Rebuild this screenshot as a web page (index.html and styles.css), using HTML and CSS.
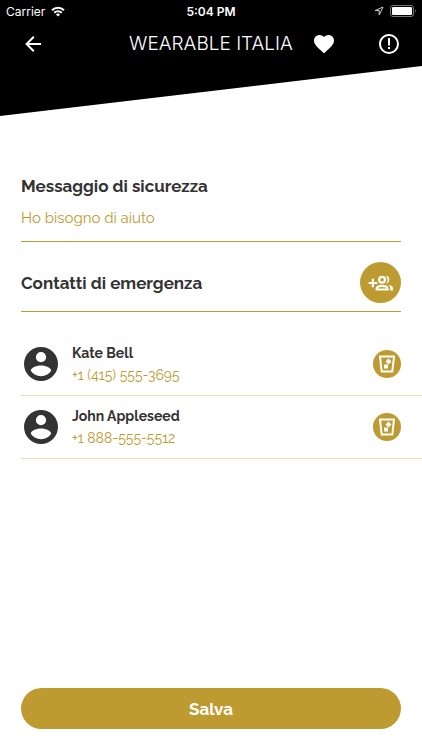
FILE: index.html
```html
<!DOCTYPE html>
<html lang="it">
<head>
<meta charset="UTF-8">
<meta name="viewport" content="width=device-width, initial-scale=1.0">
<title>Wearable Italia</title>
<link rel="stylesheet" href="styles.css">
</head>
<body>

<header class="header">
    <div class="status-bar">
        <div class="carrier">
            <span>Carrier</span>
            <svg width="14" height="11" viewBox="0 0 14 11" fill="none" stroke="#fff" stroke-width="2">
                <path d="M1 4.2a8.6 8.6 0 0 1 12 0M3.2 6.7a5.4 5.4 0 0 1 7.6 0"/>
                <path d="M7 10.6 4.9 8.5a3 3 0 0 1 4.2 0z" fill="#fff" stroke="none"/>
            </svg>
        </div>
        <span class="time">5:04 PM</span>
        <div class="battery">
            <svg width="10" height="10" viewBox="0 0 10 10" fill="none" stroke="#ccc" stroke-linejoin="round">
                <path d="M9 1 1 4.6h4.2V9z"/>
            </svg>
            <svg width="26" height="12" viewBox="0 0 26 12">
                <rect x=".5" y=".5" width="23" height="11" rx="2.5" fill="none" stroke="#777"/>
                <rect x="2" y="2" width="20" height="8" rx="1" fill="#fff"/>
                <path d="M25 4q1.5 2 0 4z" fill="#777"/>
            </svg>
        </div>
    </div>
    <nav class="nav-bar">
        <button class="icon-btn" aria-label="Indietro">
            <svg width="24" height="24" viewBox="0 0 24 24" fill="#fff"><path d="M20 11v2H8l5.5 5.5-1.42 1.42L4.16 12l7.92-7.92L13.5 5.5 8 11h12z"/></svg>
        </button>
        <h1>WEARABLE ITALIA</h1>
        <div class="nav-actions">
            <button class="icon-btn" aria-label="Preferiti">
                <svg width="24" height="24" viewBox="0 0 24 24" fill="#fff"><path d="m12 21.35-1.45-1.32C5.4 15.36 2 12.27 2 8.5 2 5.41 4.42 3 7.5 3c1.74 0 3.41.81 4.5 2.08C13.09 3.81 14.76 3 16.5 3 19.58 3 22 5.41 22 8.5c0 3.77-3.4 6.86-8.55 11.53z"/></svg>
            </button>
            <button class="icon-btn" aria-label="Avviso">
                <svg width="24" height="24" viewBox="0 0 24 24" fill="#fff"><path d="M11 15h2v2h-2zm0-9h2v7.500h-2zm1-4C6.47 2 2 6.5 2 12a10 10 0 0 0 20 0A10 10 0 0 0 12 2m0 18a8 8 0 1 1 0-16 8 8 0 0 1 0 16"/></svg>
            </button>
        </div>
    </nav>
</header>

<main class="content">
    <div class="message">
        <label for="message">Messaggio di sicurezza</label>
        <input type="text" id="message" value="Ho bisogno di aiuto">
    </div>

    <div class="contacts-header">
        <h2>Contatti di emergenza</h2>
        <button class="add-btn" aria-label="Aggiungi contatto">
            <svg width="26" height="26" viewBox="0 0 24 24" fill="none" stroke="#fff" stroke-width="2">
                <path d="M4.500 8v8M.500 12h8"/>
                <circle cx="13" cy="9" r="2.700"/>
                <path d="M8 18v-1c0-1.300 2.500-2.400 5-2.400s5 1.100 5 2.400v1z"/>
                <path d="M16.500 5.300c3.800.2 4.600 5.800.5 7.400 1.600-2.300 1.500-5.200-.5-7.400zM18.700 13.500c2.500.4 4.500 1.500 4.500 3.200V19h-2.700v-2.300c0-1.300-.7-2.300-1.800-3.200z" fill="#fff" stroke="none"/>
            </svg>
        </button>
    </div>

    <ul class="contacts">
        <li class="contact">
            <svg class="avatar" viewBox="2 2 20 20" fill="#333"><path d="M12 19.2c-2.500 0-4.710-1.280-6-3.200.03-2 4-3.100 6-3.100s5.970 1.100 6 3.100a7.230 7.230 0 0 1-6 3.200M12 5a3 3 0 1 1 0 6 3 3 0 0 1 0-6m0-3a10 10 0 1 0 0 20 10 10 0 0 0 0-20" fill-rule="evenodd"/></svg>
            <div class="contact-info">
                <span class="name">Kate Bell</span>
                <a class="phone" href="tel:+14155553695">+1 (415) 555-3695</a>
            </div>
            <button class="delete-btn" aria-label="Elimina Kate Bell">
                <svg width="18" height="18" viewBox="0 0 18 18" fill="none" stroke="#fff" stroke-width="2"><path d="M2 1.500h14L14.300 16.500H3.700z"/><path d="M6 9.500h4v4H6zM10.500 3.500l3 3-3 3-3-3z" fill="#fff" stroke="none"/></svg>
            </button>
        </li>
        <li class="contact">
            <svg class="avatar" viewBox="2 2 20 20" fill="#333"><path d="M12 19.2c-2.500 0-4.710-1.280-6-3.200.03-2 4-3.100 6-3.100s5.970 1.100 6 3.100a7.230 7.230 0 0 1-6 3.200M12 5a3 3 0 1 1 0 6 3 3 0 0 1 0-6m0-3a10 10 0 1 0 0 20 10 10 0 0 0 0-20" fill-rule="evenodd"/></svg>
            <div class="contact-info">
                <span class="name">John Appleseed</span>
                <a class="phone" href="tel:+18885555512">+1 888-555-5512</a>
            </div>
            <button class="delete-btn" aria-label="Elimina John Appleseed">
                <svg width="18" height="18" viewBox="0 0 18 18" fill="none" stroke="#fff" stroke-width="2"><path d="M2 1.500h14L14.300 16.500H3.700z"/><path d="M6 9.500h4v4H6zM10.500 3.500l3 3-3 3-3-3z" fill="#fff" stroke="none"/></svg>
            </button>
        </li>
    </ul>

    <button class="save-btn">Salva</button>
</main>

</body>
</html>
```
FILE: styles.css
```css
* {
    box-sizing: border-box;
}
body {
    font-family: Raleway, Lato, sans-serif;
    margin: 0;
    min-height: 100vh;
    display: flex;
    flex-direction: column;
    background-color: #fff;
    color: #333;
}
h1, h2 {
    margin: 0;
}
svg {
    display: block;
    flex-shrink: 0;
}
button {
    display: flex;
    align-items: center;
    justify-content: center;
    padding: 0;
    border: none;
    font-family: inherit;
    cursor: pointer;
}
.header {
    height: 116px;
    background-color: #000;
    color: #fff;
    clip-path: polygon(0 0, 100% 0, 100% 66px, 0 100%);
}
.status-bar {
    display: grid;
    grid-template-columns: 1fr auto 1fr;
    align-items: center;
    height: 22px;
    padding: 0 6px;
    font-family: Inter, sans-serif;
    font-size: 12px;
}
.carrier, .battery {
    display: flex;
    align-items: center;
    gap: 6px;
}
.battery {
    justify-content: flex-end;
}
.time {
    font-weight: 600;
}
.nav-bar {
    display: grid;
    grid-template-columns: 1fr auto 1fr;
    align-items: center;
    height: 43px;
    padding: 0 21px;
}
.nav-bar h1 {
    font-family: Inter, sans-serif;
    font-size: 19px;
    font-weight: 300;
}
.nav-actions {
    display: flex;
    justify-content: space-between;
    padding-left: 19px;
}
.icon-btn {
    width: 24px;
    background: none;
}
.content {
    flex: 1;
    display: flex;
    flex-direction: column;
    padding: 58px 21px 21px;
}
.message {
    border-bottom: 1px solid #be9b30;
}
.message label, .contacts-header h2 {
    display: block;
    font-size: 17px;
    font-weight: bold;
    line-height: 24px;
}
.message input {
    width: 100%;
    height: 24px;
    margin: 8px 0 11px;
    padding: 0;
    border: none;
    background: none;
    font-family: inherit;
    font-size: 15px;
    color: #be9b30;
}
.contacts-header {
    display: flex;
    align-items: center;
    justify-content: space-between;
    padding: 20px 0 8px;
    border-bottom: 1px solid #be9b30;
}
.add-btn {
    width: 41px;
    height: 41px;
    border-radius: 50%;
    background-color: #be9b30;
}
.contacts {
    list-style: none;
    margin: 21px -21px 20px 0;
    padding: 0;
}
.contact {
    display: flex;
    align-items: center;
    height: 63px;
    padding: 0 21px 0 3px;
    border-bottom: 1px solid #e9deb9;
}
.avatar {
    width: 34px;
    height: 34px;
}
.contact-info {
    flex: 1;
    display: flex;
    flex-direction: column;
    padding-left: 14px;
    line-height: 22px;
}
.name {
    font-size: 14px;
    font-weight: bold;
}
.phone {
    font-size: 14px;
    color: #be9b30;
    text-decoration: none;
}
.delete-btn {
    width: 28px;
    height: 28px;
    border-radius: 50%;
    background-color: #be9b30;
}
.save-btn {
    width: 100%;
    height: 41px;
    margin-top: auto;
    border-radius: 21px;
    background-color: #be9b30;
    color: #fff;
    font-size: 17px;
    font-weight: bold;
}
```
